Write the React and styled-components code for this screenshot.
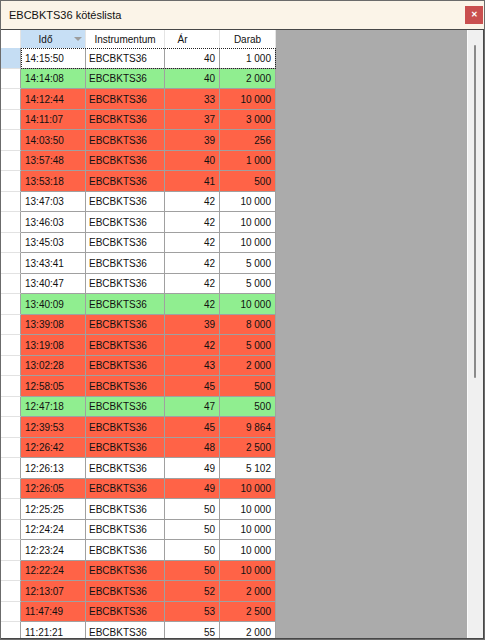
import React from 'react';
import styled, { createGlobalStyle } from 'styled-components';

const GlobalStyle = createGlobalStyle`
  html, body {
    margin: 0;
    padding: 0;
    background: #ffffff;
  }
  * {
    box-sizing: border-box;
  }
`;

const Window = styled.div`
  width: 485px;
  height: 640px;
  display: flex;
  flex-direction: column;
  border: 1px solid #6b6b6b;
  background: #fbf4e8;
  overflow: hidden;
`;

const TitleBar = styled.div`
  height: 28px;
  flex: none;
  display: flex;
  align-items: center;
  justify-content: space-between;
  padding-left: 8px;
  padding-right: 1px;
  background: #fbf4e8;
`;

const Title = styled.span`
  font-family: 'Liberation Sans', Arial, sans-serif;
  font-size: 11px;
  color: #111;
`;

const CloseButton = styled.button`
  width: 18px;
  height: 18px;
  border: none;
  padding: 0;
  margin: 0;
  background: #c94f4f;
  color: #fff;
  font-family: 'Liberation Sans', Arial, sans-serif;
  font-size: 8px;
  font-weight: bold;
  line-height: 18px;
  text-align: center;
  cursor: pointer;
`;

const Body = styled.div`
  flex: 1;
  min-height: 0;
  display: flex;
  border-top: 1px solid #474747;
  border-bottom: 1px solid #474747;
  border-right: 1px solid #474747;
`;

const GridArea = styled.div`
  flex: 1;
  background: #ababab;
  overflow: hidden;
  font-family: 'Liberation Sans', Arial, sans-serif;
  font-size: 10px;
  color: #111;
`;

const Table = styled.div`
  display: flex;
  flex-direction: column;
  width: 275px;
`;

const HeaderRow = styled.div`
  display: flex;
  height: 18px;
  background: #fff;
`;

const Corner = styled.div`
  width: 20px;
  border-right: 1px solid #e4e4e4;
`;

const HeaderCell = styled.div`
  width: ${(p) => p.$w}px;
  display: flex;
  align-items: center;
  padding-right: ${(p) => p.$padRight || 0}px;
  background: ${(p) => (p.$sorted ? '#c7dff5' : '#fff')};
  border-right: 1px solid #e4e4e4;
`;

const HeaderLabel = styled.span`
  flex: 1;
  text-align: center;
`;

const SortGlyph = styled.svg`
  width: 8px;
  height: 4px;
  margin: 0 3px 0 4px;
  flex: none;
`;

const Row = styled.div`
  display: flex;
  height: 20.5px;
  flex: none;
`;

const RowHeader = styled.div`
  width: 20px;
  flex: none;
  background: ${(p) => (p.$selected ? '#c5ddf3' : '#fff')};
  border-right: 1px solid #a0a0a0;
  border-bottom: 1px solid #e2e2e2;
`;

const rowColors = {
  white: '#ffffff',
  green: '#90ee90',
  red: '#ff6347',
};

const Cells = styled.div`
  display: flex;
  background: ${(p) => rowColors[p.$tone]};
  outline: ${(p) => (p.$focused ? '1px dotted #222' : 'none')};
  outline-offset: -1px;
`;

const Cell = styled.div`
  width: ${(p) => p.$w}px;
  display: flex;
  align-items: center;
  justify-content: ${(p) => (p.$right ? 'flex-end' : 'flex-start')};
  padding: 1px 4px 0 ${(p) => p.$padLeft || 3}px;
  border-right: 1px solid #a0a0a0;
  border-bottom: 1px solid #a0a0a0;
  white-space: nowrap;
`;

const Scrollbar = styled.div`
  width: 16px;
  flex: none;
  background: #f0f0f0;
  border-left: 1px solid #fbfbfb;
  padding: 15px 0 0 6px;
`;

const Thumb = styled.div`
  width: 2px;
  height: 333px;
  border-radius: 1px;
  background: #8a8a8a;
`;

const columns = [
  { key: 'time', label: 'Idő', w: 65, sorted: true },
  { key: 'name', label: 'Instrumentum', w: 79 },
  { key: 'price', label: 'Ár', w: 55, right: true, padRight: 19 },
  { key: 'qty', label: 'Darab', w: 56, right: true },
];

const trades = [
  ['14:15:50', 40, '1 000', 'white'],
  ['14:14:08', 40, '2 000', 'green'],
  ['14:12:44', 33, '10 000', 'red'],
  ['14:11:07', 37, '3 000', 'red'],
  ['14:03:50', 39, '256', 'red'],
  ['13:57:48', 40, '1 000', 'red'],
  ['13:53:18', 41, '500', 'red'],
  ['13:47:03', 42, '10 000', 'white'],
  ['13:46:03', 42, '10 000', 'white'],
  ['13:45:03', 42, '10 000', 'white'],
  ['13:43:41', 42, '5 000', 'white'],
  ['13:40:47', 42, '5 000', 'white'],
  ['13:40:09', 42, '10 000', 'green'],
  ['13:39:08', 39, '8 000', 'red'],
  ['13:19:08', 42, '5 000', 'red'],
  ['13:02:28', 43, '2 000', 'red'],
  ['12:58:05', 45, '500', 'red'],
  ['12:47:18', 47, '500', 'green'],
  ['12:39:53', 45, '9 864', 'red'],
  ['12:26:42', 48, '2 500', 'red'],
  ['12:26:13', 49, '5 102', 'white'],
  ['12:26:05', 49, '10 000', 'red'],
  ['12:25:25', 50, '10 000', 'white'],
  ['12:24:24', 50, '10 000', 'white'],
  ['12:23:24', 50, '10 000', 'white'],
  ['12:22:24', 50, '10 000', 'red'],
  ['12:13:07', 52, '2 000', 'red'],
  ['11:47:49', 53, '2 500', 'red'],
  ['11:21:21', 55, '2 000', 'white'],
].map(([time, price, qty, tone]) => ({ time, name: 'EBCBKTS36', price, qty, tone }));

function App() {
  return (
    <>
      <GlobalStyle />
      <Window>
        <TitleBar>
          <Title>EBCBKTS36 kötéslista</Title>
          <CloseButton aria-label="Bezárás">✕</CloseButton>
        </TitleBar>
        <Body>
          <GridArea>
            <Table>
              <HeaderRow>
                <Corner />
                {columns.map((col) => (
                  <HeaderCell key={col.key} $w={col.w} $sorted={col.sorted} $padRight={col.padRight}>
                    <HeaderLabel>{col.label}</HeaderLabel>
                    {col.sorted && (
                      <SortGlyph viewBox="0 0 8 4">
                        <path d="M0 0 H8 L4 4 Z" fill="#9d9d9d" />
                      </SortGlyph>
                    )}
                  </HeaderCell>
                ))}
              </HeaderRow>
              {trades.map((t, i) => (
                <Row key={i}>
                  <RowHeader $selected={i === 0} />
                  <Cells $tone={t.tone} $focused={i === 0}>
                    {columns.map((col) => (
                      <Cell key={col.key} $w={col.w} $right={col.right} $padLeft={col.key === 'time' ? 4 : 3}>
                        {t[col.key]}
                      </Cell>
                    ))}
                  </Cells>
                </Row>
              ))}
            </Table>
          </GridArea>
          <Scrollbar>
            <Thumb />
          </Scrollbar>
        </Body>
      </Window>
    </>
  );
}

export default App;
